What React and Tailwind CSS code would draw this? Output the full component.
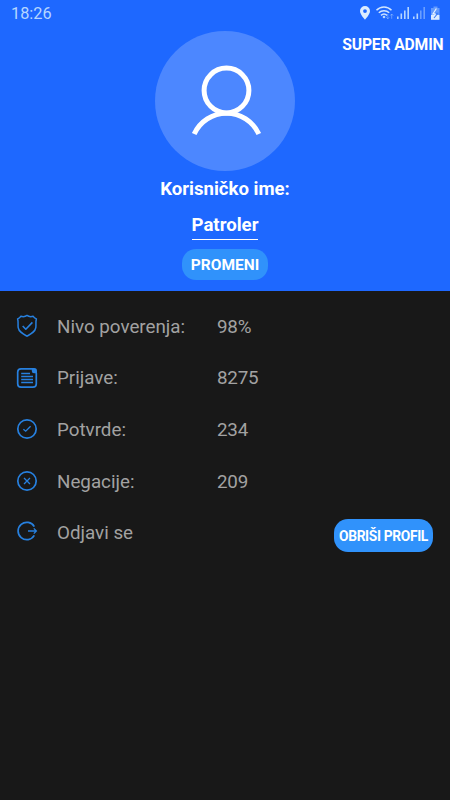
import React from 'react';

function ShieldIcon() {
  return (
    <svg width="22" height="24" viewBox="0 0 22 24" fill="none" stroke="currentColor" strokeWidth="1.5" strokeLinejoin="round">
      <path d="M11 1.4C9.4 2.7 7.4 3.1 4.8 2.3C4.2 3.7 3.2 4.4 1.6 4.9C2.6 7.7 1.7 10.6 2.2 13.6C2.9 17.9 6.6 19.8 11 22.2C15.4 19.8 19.1 17.9 19.8 13.6C20.3 10.6 19.4 7.7 20.4 4.9C18.8 4.4 17.8 3.7 17.2 2.3C14.6 3.1 12.6 2.7 11 1.4Z" />
      <path d="M6.7 12L9.8 15.2L16.4 8.4" strokeWidth="1.6" />
    </svg>
  );
}

function ReportIcon() {
  return (
    <svg width="22" height="22" viewBox="0 0 22 22" fill="none" stroke="currentColor" strokeWidth="1.7">
      <path d="M16 1.8H5A3.3 3.3 0 0 0 1.7 5V17A3.3 3.3 0 0 0 5 20.2H17A3.3 3.3 0 0 0 20.3 17V6" />
      <path d="M15.8 1H18A2.9 2.9 0 0 1 21 4V6.2H18A2.2 2.2 0 0 1 15.8 4Z" fill="currentColor" stroke="none" />
      <path d="M5.2 6.5H14M5.2 9.5H17M5.2 12.5H17M5.2 15.5H17" strokeWidth="1.5" />
    </svg>
  );
}

function CheckIcon() {
  return (
    <svg width="22" height="22" viewBox="0 0 22 22" fill="none" stroke="currentColor" strokeWidth="1.7">
      <circle cx="11" cy="11" r="9.2" />
      <path d="M7.4 11.2L9.7 13.2L14.6 8.2" strokeWidth="1.3" />
    </svg>
  );
}

function CrossIcon() {
  return (
    <svg width="22" height="22" viewBox="0 0 22 22" fill="none" stroke="currentColor" strokeWidth="1.7">
      <circle cx="11" cy="11" r="9.2" />
      <path d="M8 8L14 14M14 8L8 14" strokeWidth="1.3" />
    </svg>
  );
}

function LogoutIcon() {
  return (
    <svg width="22" height="22" viewBox="0 0 22 22" fill="none" stroke="currentColor" strokeWidth="1.7">
      <path d="M18.3 6.6A8.7 8.7 0 1 0 18.3 15.4" />
      <path d="M12 11H20.4M17.8 8.4L20.4 11L17.8 13.6" strokeWidth="1.3" />
    </svg>
  );
}

const rows = [
  { icon: <ShieldIcon />, label: 'Nivo poverenja:', value: '98%' },
  { icon: <ReportIcon />, label: 'Prijave:', value: '8275' },
  { icon: <CheckIcon />, label: 'Potvrde:', value: '234' },
  { icon: <CrossIcon />, label: 'Negacije:', value: '209' },
];

function StatusBar() {
  return (
    <div className="flex h-[31px] items-start justify-between pl-[11px] pr-[9px] text-[#b5d6ff]">
      <span className="pt-[4px] text-[16.3px] leading-5">18:26</span>
      <svg className="mt-[4px]" width="84" height="18" viewBox="0 0 84 18" fill="currentColor">
        <path fillRule="evenodd" d="M8 2A5 5 0 0 0 3 7C3 10.6 8 15.6 8 15.6S13 10.6 13 7A5 5 0 0 0 8 2ZM8 5.2A1.9 1.9 0 1 1 8 9A1.9 1.9 0 0 1 8 5.2Z" fill="#dcecff" />
        <g fill="none" stroke="#cfe4ff" strokeWidth="1.5">
          <path d="M19.5 6.2C23.6 1.8 30.4 1.8 34.5 6.2" />
          <path d="M21.8 8.8C24.7 5.9 29.3 5.9 32.2 8.8" />
          <path d="M24 11.4C25.8 9.7 28.2 9.7 30 11.4" />
        </g>
        <circle cx="27" cy="13" r="1.3" />
        <path d="M30.8 10V14.8M29.3 13.2L30.8 14.8L32.3 13.2M34.7 14.8V10M33.2 11.6L34.7 10L36.2 11.6" fill="none" stroke="currentColor" strokeWidth="0.9" opacity="0.5" />
        <path d="M40 12.5H41.6V15H40ZM43.5 9.5H45.1V15H43.5ZM47 6.5H48.6V15H47ZM50.4 3H52V15H50.4Z" />
        <path d="M56 12.5H57.6V15H56ZM59.5 9.5H61.1V15H59.5Z" />
        <path d="M63 6.5H64.6V15H63ZM66.4 3H68V15H66.4Z" opacity="0.5" />
        <path d="M76.5 2.4H80.5V4H82.5V11H74V4H76.5Z" opacity="0.45" />
        <path d="M74 11H82.5V15.8H74Z" fill="#dcecff" />
        <path d="M79.4 4.5L76 9.8H78.3L77.4 13.2" fill="none" stroke="#e8f3ff" strokeWidth="1.2" />
        <path d="M77 14L80.8 9.4H78.6" fill="none" stroke="#3b7df8" strokeWidth="1.1" />
      </svg>
    </div>
  );
}

export default function App() {
  return (
    <div className="flex h-[800px] w-[450px] flex-col overflow-hidden bg-[#181818] font-[Roboto,sans-serif]">
      {/* Profile header */}
      <header className="flex h-[291px] flex-col bg-[#1e68ff] text-white">
        <StatusBar />
        <div className="grid grid-cols-[1fr_140px_1fr]">
          <div />
          <div className="h-[140px] rounded-full bg-[#4c87ff]">
            <svg width="140" height="140" viewBox="0 0 140 140" fill="none" stroke="white" strokeWidth="5">
              <circle cx="71.5" cy="59.5" r="22.4" />
              <path d="M39.2 103A35.5 35.5 0 0 1 103.8 103" />
            </svg>
          </div>
          <span className="justify-self-end whitespace-nowrap pr-[6.5px] pt-[4px] text-[15.7px] font-bold leading-5 tracking-[-0.01em]">SUPER ADMIN</span>
        </div>
        <div className="flex flex-col items-center">
          <h1 className="mt-[6px] text-[18.6px] font-bold leading-6">Korisničko ime:</h1>
          <div className="mt-[12px] h-[27px] border-b border-white text-[18.6px] font-bold leading-6">Patroler</div>
          <button className="mt-[9px] h-[31px] w-[86px] rounded-[14px] bg-[#3092fb] pt-[2px] text-[15.5px] font-bold">PROMENI</button>
        </div>
      </header>

      {/* Stats */}
      <main className="flex flex-col pt-[9.5px] text-[18.8px] text-[#a2a2a2]">
        {rows.map((row) => (
          <div key={row.label} className="flex h-[51.7px] items-center pl-4">
            <span className="w-[41px] pb-px text-[#2780df]">{row.icon}</span>
            <span className="w-[160px] pt-px">{row.label}</span>
            <span className="pt-px tracking-[-0.01em]">{row.value}</span>
          </div>
        ))}
        <div className="flex h-[51.7px] items-center pl-4 pr-[17px]">
          <span className="w-[41px] pb-[4px] text-[#2780df]"><LogoutIcon /></span>
          <span className="flex-1">Odjavi se</span>
          <button className="mt-[5px] h-[33px] w-[99px] whitespace-nowrap rounded-[14px] bg-[#3092fb] pt-px text-[13.8px] font-bold tracking-[-0.025em] text-white">OBRIŠI PROFIL</button>
        </div>
      </main>
    </div>
  );
}
